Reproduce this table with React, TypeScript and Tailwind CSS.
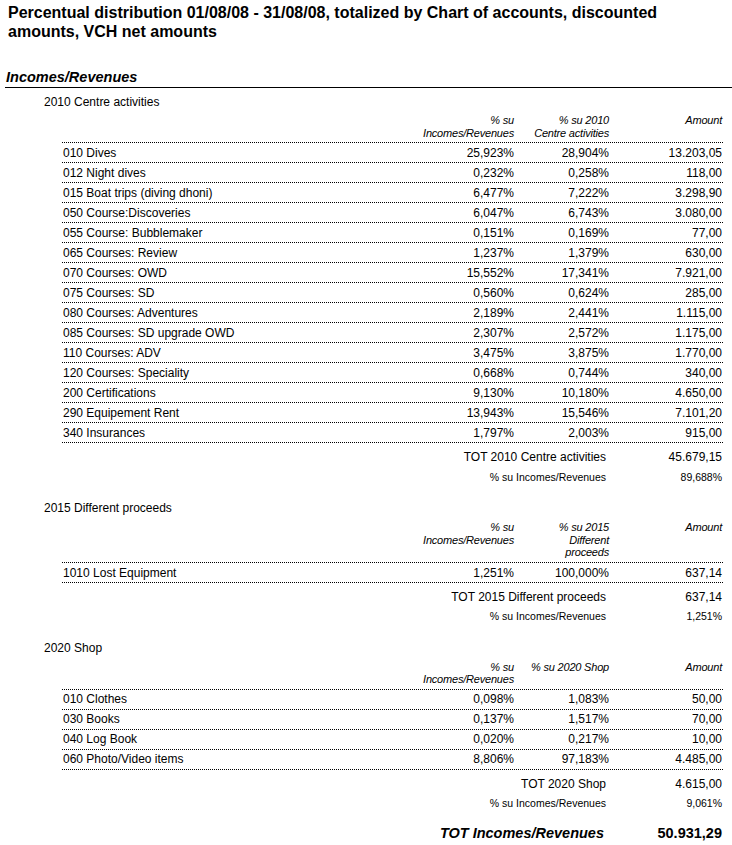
type Row = [string, string, string, string];

type Group = {
  title: string;
  head2: string[];
  rows: Row[];
  tot: string;
  totAmount: string;
  pct: string;
};

const groups: Group[] = [
  {
    title: '2010 Centre activities',
    head2: ['% su 2010', 'Centre activities'],
    rows: [
      ['010 Dives', '25,923%', '28,904%', '13.203,05'],
      ['012 Night dives', '0,232%', '0,258%', '118,00'],
      ['015 Boat trips (diving dhoni)', '6,477%', '7,222%', '3.298,90'],
      ['050 Course:Discoveries', '6,047%', '6,743%', '3.080,00'],
      ['055 Course: Bubblemaker', '0,151%', '0,169%', '77,00'],
      ['065 Courses: Review', '1,237%', '1,379%', '630,00'],
      ['070 Courses: OWD', '15,552%', '17,341%', '7.921,00'],
      ['075 Courses: SD', '0,560%', '0,624%', '285,00'],
      ['080 Courses: Adventures', '2,189%', '2,441%', '1.115,00'],
      ['085 Courses: SD upgrade OWD', '2,307%', '2,572%', '1.175,00'],
      ['110 Courses: ADV', '3,475%', '3,875%', '1.770,00'],
      ['120 Courses: Speciality', '0,668%', '0,744%', '340,00'],
      ['200 Certifications', '9,130%', '10,180%', '4.650,00'],
      ['290 Equipement Rent', '13,943%', '15,546%', '7.101,20'],
      ['340 Insurances', '1,797%', '2,003%', '915,00'],
    ],
    tot: 'TOT 2010 Centre activities',
    totAmount: '45.679,15',
    pct: '89,688%',
  },
  {
    title: '2015 Different proceeds',
    head2: ['% su 2015', 'Different', 'proceeds'],
    rows: [['1010 Lost Equipment', '1,251%', '100,000%', '637,14']],
    tot: 'TOT 2015 Different proceeds',
    totAmount: '637,14',
    pct: '1,251%',
  },
  {
    title: '2020 Shop',
    head2: ['% su 2020 Shop'],
    rows: [
      ['010 Clothes', '0,098%', '1,083%', '50,00'],
      ['030 Books', '0,137%', '1,517%', '70,00'],
      ['040 Log Book', '0,020%', '0,217%', '10,00'],
      ['060 Photo/Video items', '8,806%', '97,183%', '4.485,00'],
    ],
    tot: 'TOT 2020 Shop',
    totAmount: '4.615,00',
    pct: '9,061%',
  },
];

function HeadCell({ lines, className }: { lines: string[]; className: string }) {
  return (
    <div className={`text-right italic text-[11px] leading-[12.7px] tracking-[-0.2px] ${className}`}>
      {lines.map((l) => (
        <div key={l}>{l}</div>
      ))}
    </div>
  );
}

function GroupBlock({ g, first }: { g: Group; first: boolean }) {
  return (
    <div className={first ? 'mt-[4px]' : 'mt-[11px]'}>
      <div className="pl-[44px] h-[20px] leading-[20px] text-[12px]">{g.title}</div>

      {/* column headers */}
      <div className="ml-[62px] w-[661px] mt-[2.5px] pb-[3px] flex items-start">
        <div className="flex-1" />
        <HeadCell lines={['% su', 'Incomes/Revenues']} className="w-[100px]" />
        <HeadCell lines={g.head2} className="w-[95px]" />
        <HeadCell lines={['Amount']} className="w-[114px] pr-[1px]" />
      </div>

      {/* rows */}
      <div className="ml-[62px] w-[661px] border-t border-dotted border-black text-[12px]">
        {g.rows.map((r) => (
          <div key={r[0]} className="flex h-[20px] items-center border-b border-dotted border-black">
            <div className="flex-1 pl-[1px]">{r[0]}</div>
            <div className="w-[100px] text-right">{r[1]}</div>
            <div className="w-[95px] text-right">{r[2]}</div>
            <div className="w-[114px] pr-[1px] text-right">{r[3]}</div>
          </div>
        ))}
      </div>

      {/* totals */}
      <div className="ml-[62px] w-[661px] mt-[4px]">
        <div className="flex h-[20px] items-center justify-end text-[12px]">
          <div className="pr-[3px]">{g.tot}</div>
          <div className="w-[114px] pr-[1px] text-right">{g.totAmount}</div>
        </div>
        <div className="flex h-[20px] items-center justify-end text-[10.5px]">
          <div className="pr-[3px]">% su Incomes/Revenues</div>
          <div className="w-[114px] pr-[1px] text-right">{g.pct}</div>
        </div>
      </div>
    </div>
  );
}

export default function App() {
  return (
    <div className="w-[732px] min-h-[845px] bg-white text-black font-['Liberation_Sans',Arial,sans-serif]">
      <h1 className="pt-[2.5px] pl-[8px] pr-[8px] text-[16px] leading-[19px] font-bold">
        Percentual distribution 01/08/08 - 31/08/08, totalized by Chart of accounts, discounted amounts, VCH net amounts
      </h1>

      <div className="mt-[26px] ml-[5px] h-[21px] leading-[20px] border-b border-black pl-[1px] text-[14.5px] font-bold italic">
        Incomes/Revenues
      </div>

      {groups.map((g, i) => (
        <GroupBlock key={g.title} g={g} first={i === 0} />
      ))}

      {/* grand total */}
      <div className="ml-[62px] w-[661px] mt-[8px] flex h-[24px] items-center justify-end font-bold text-[14.5px]">
        <div className="pr-[5px] italic">TOT Incomes/Revenues</div>
        <div className="w-[114px] pr-[1px] text-right">50.931,29</div>
      </div>
    </div>
  );
}
